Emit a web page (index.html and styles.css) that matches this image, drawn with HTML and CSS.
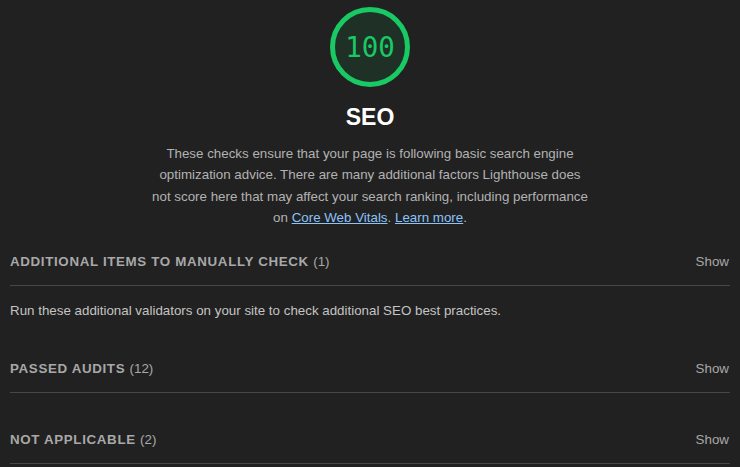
FILE: index.html
```html
<!DOCTYPE html>
<html>
<head>
<meta charset="utf-8">
<link rel="stylesheet" href="styles.css">
</head>
<body>
<div class="page">
  <div class="cat-header">
    <div class="gauge">
      <svg class="gauge-svg" width="80" height="80" viewBox="0 0 80 80">
        <circle cx="40" cy="40" r="37.5" fill="#1f3126" stroke="#18c964" stroke-width="5"/>
      </svg>
      <div class="gauge-score">100</div>
    </div>
    <div class="cat-title">SEO</div>
    <div class="cat-desc">These checks ensure that your page is following basic search engine optimization advice. There are many additional factors Lighthouse does not score here that may affect your search ranking, including performance on <a href="#">Core Web Vitals</a>. <a href="#">Learn more</a>.</div>
  </div>

  <div class="group group-first">
    <div class="group-head">
      <span class="group-title">Additional items to manually check <span class="count">(1)</span></span>
      <span class="show">Show</span>
    </div>
    <div class="group-desc">Run these additional validators on your site to check additional SEO best practices.</div>
  </div>

  <div class="group group-next">
    <div class="group-head">
      <span class="group-title">Passed audits <span class="count">(12)</span></span>
      <span class="show">Show</span>
    </div>
  </div>

  <div class="group group-last">
    <div class="group-head">
      <span class="group-title">Not applicable <span class="count">(2)</span></span>
      <span class="show">Show</span>
    </div>
  </div>
</div>
</body>
</html>
```

FILE: styles.css
```css
html, body {
  margin: 0;
  padding: 0;
  background: #212121;
}
body {
  font-family: "Liberation Sans", Arial, sans-serif;
  color: #c4c4c4;
}
.page {
  padding: 0 10px;
}
.cat-header {
  display: flex;
  flex-direction: column;
  align-items: center;
  padding-top: 7px;
}
.gauge {
  position: relative;
  width: 80px;
  height: 80px;
}
.gauge-svg {
  display: block;
}
.gauge-score {
  position: absolute;
  inset: 0;
  display: flex;
  align-items: center;
  justify-content: center;
  font-family: "DejaVu Sans Mono", monospace;
  font-size: 27.5px;
  color: #18c964;
}
.cat-title {
  margin-top: 17px;
  font-size: 23px;
  line-height: 26px;
  font-weight: bold;
  color: #ffffff;
}
.cat-desc {
  margin-top: 13px;
  width: 440px;
  text-align: center;
  font-size: 13.35px;
  line-height: 21.3px;
  color: #b2b2b2;
}
.cat-desc a {
  color: #8cc3f8;
  text-decoration: underline;
}
.group-head {
  display: flex;
  justify-content: space-between;
  align-items: center;
  line-height: 16px;
  padding-bottom: 15px;
  border-bottom: 1px solid #474747;
}
.group-first .group-head {
  padding-top: 26px;
}
.group-next .group-head {
  padding-top: 40px;
}
.group-last .group-head {
  padding-top: 39px;
}
.group-title {
  text-transform: uppercase;
  font-weight: bold;
  font-size: 13.35px;
  letter-spacing: 0.65px;
  color: #a8a8a8;
}
.count {
  font-weight: normal;
  letter-spacing: 0;
}
.show {
  font-size: 13.35px;
  color: #a8a8a8;
  margin-right: 1px;
}
.group-desc {
  padding-top: 15px;
  font-size: 13.35px;
  line-height: 20px;
  color: #c4c4c4;
}
```
